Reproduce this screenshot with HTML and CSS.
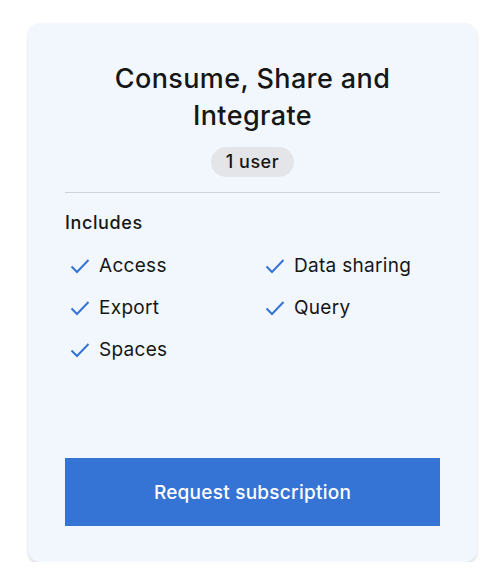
FILE: index.html
```html
<!DOCTYPE html>
<html>
<head>
<meta charset="utf-8">
<link rel="stylesheet" href="styles.css">
</head>
<body>
<div class="card">
  <h2 class="title">Consume, Share and Integrate</h2>
  <div class="badge-row"><span class="badge">1 user</span></div>
  <hr class="divider">
  <div class="includes">Includes</div>
  <ul class="features">
    <li><svg class="check" viewBox="0 0 20 16"><path d="M1.5 8.5 L7 14 L18.5 2" fill="none" stroke="#3573d4" stroke-width="2"/></svg>Access</li>
    <li><svg class="check" viewBox="0 0 20 16"><path d="M1.5 8.5 L7 14 L18.5 2" fill="none" stroke="#3573d4" stroke-width="2"/></svg>Data sharing</li>
    <li><svg class="check" viewBox="0 0 20 16"><path d="M1.5 8.5 L7 14 L18.5 2" fill="none" stroke="#3573d4" stroke-width="2"/></svg>Export</li>
    <li><svg class="check" viewBox="0 0 20 16"><path d="M1.5 8.5 L7 14 L18.5 2" fill="none" stroke="#3573d4" stroke-width="2"/></svg>Query</li>
    <li><svg class="check" viewBox="0 0 20 16"><path d="M1.5 8.5 L7 14 L18.5 2" fill="none" stroke="#3573d4" stroke-width="2"/></svg>Spaces</li>
  </ul>
  <button class="cta">Request subscription</button>
</div>
</body>
</html>
```
FILE: styles.css
```css
* { box-sizing: border-box; }
body {
  margin: 0;
  background: #ffffff;
  font-family: "Inter", "Noto Sans", sans-serif;
  color: #161616;
}
.card {
  margin: 23px 0 0 28px;
  width: 449px;
  height: 539px;
  background: #f2f7fe;
  border-radius: 12px;
  box-shadow: 0 2px 3px rgba(0,0,0,0.15);
  padding: 37px 37px 36px 37px;
  display: flex;
  flex-direction: column;
}
.title {
  margin: 0;
  font-size: 27px;
  font-weight: 500;
  line-height: 37px;
  text-align: center;
  padding: 0 20px;
  letter-spacing: 0.4px;
}
.badge-row {
  display: flex;
  justify-content: center;
  margin-top: 13px;
}
.badge {
  background: #e3e5e9;
  border-radius: 15px;
  height: 30px;
  padding: 0 15px;
  font-size: 18px;
  font-weight: 500;
  line-height: 30px;
  letter-spacing: 0.5px;
}
.divider {
  border: 0;
  border-top: 1px solid #cfd2d6;
  margin: 15px 0 0 0;
}
.includes {
  margin-top: 18px;
  font-size: 18px;
  font-weight: 500;
  line-height: 24px;
  letter-spacing: 0.6px;
}
.features {
  list-style: none;
  margin: 18px 0 0 0;
  padding: 0;
  display: grid;
  grid-template-columns: 195px 1fr;
  row-gap: 17px;
}
.features li {
  display: flex;
  align-items: center;
  gap: 9px;
  padding-left: 5px;
  font-size: 19px;
  line-height: 25px;
  letter-spacing: 0.3px;
}
.check {
  width: 20px;
  height: 16px;
}
.cta {
  margin-top: auto;
  height: 68px;
  width: 100%;
  border: 0;
  background: #3573d4;
  color: #ffffff;
  font-family: "Inter", "Noto Sans", sans-serif;
  font-size: 19px;
  font-weight: 500;
  letter-spacing: 0.25px;
}
```
